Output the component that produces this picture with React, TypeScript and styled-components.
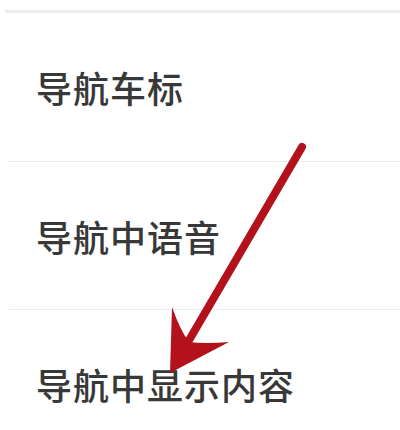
import React from 'react';
import styled, { createGlobalStyle } from 'styled-components';

const GlobalStyle = createGlobalStyle`
  html, body {
    margin: 0;
    padding: 0;
    background: #ffffff;
  }
  body {
    font-family: "Noto Sans CJK SC", "Noto Sans", sans-serif;
  }
`;

const Screen = styled.div`
  position: relative;
  width: 400px;
  height: 430px;
  overflow: hidden;
  background: #ffffff;
  padding-top: 10px;
  box-sizing: border-box;
`;

const TopRule = styled.div`
  height: 3px;
  margin-left: 5px;
  background: #ececec;
`;

const List = styled.ul`
  list-style: none;
  margin: 0;
  padding: 0;
`;

const Row = styled.li<{ $divider?: boolean }>`
  display: flex;
  align-items: center;
  height: 148px;
  box-sizing: border-box;
  border-top: ${({ $divider }) => ($divider ? '1px solid #ebebeb' : 'none')};
  margin-left: ${({ $divider }) => ($divider ? '9px' : '0')};
  padding-left: ${({ $divider }) => ($divider ? '27px' : '36px')};
`;

const Label = styled.span`
  font-size: 36px;
  font-weight: 500;
  line-height: 1;
  color: #383838;
  letter-spacing: 1px;
`;

const Annotation = styled.svg`
  position: absolute;
  left: 0;
  top: 0;
  pointer-events: none;
`;

const items = ['导航车标', '导航中语音', '导航中显示内容'];

const App = () => {
  return (
    <>
      <GlobalStyle />
      <Screen>
        <TopRule />
        <List>
          {items.map((text, i) => (
            <Row key={text} $divider={i > 0}>
              <Label>{text}</Label>
            </Row>
          ))}
        </List>
        <Annotation width={400} height={430} viewBox='0 0 400 430'>
          <line
            x1={302}
            y1={147}
            x2={188}
            y2={342}
            stroke='#b3121c'
            strokeWidth={8}
            strokeLinecap='round'
          />
          <path
            d='M170 373 L172 307 Q180 330 189 342 Q205 344 229 342 Z'
            fill='#b3121c'
          />
        </Annotation>
      </Screen>
    </>
  );
};

export default App;
